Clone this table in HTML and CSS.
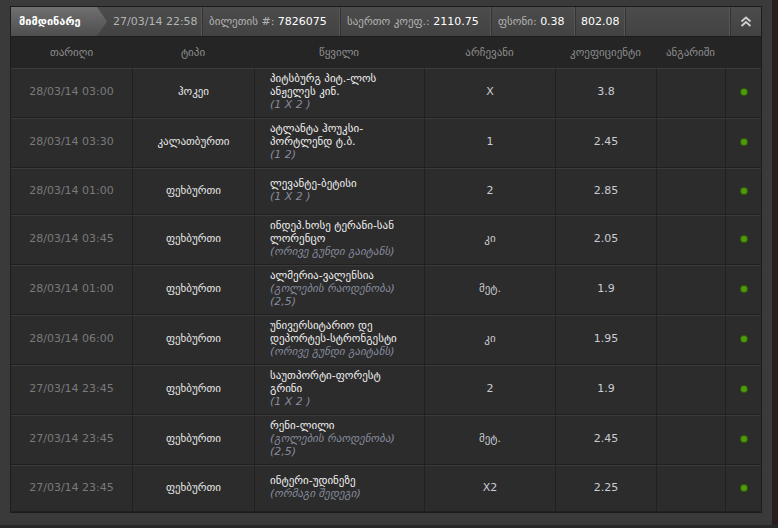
FILE: index.html
```html
<!DOCTYPE html>
<html lang="ka">
<head>
    <meta charset="UTF-8">
    <title>მიმდინარე ბილეთი</title>
    <link rel="stylesheet" href="styles.css">
</head>
<body>
    <div class="page">
        <div class="panel">
            <div class="bar">
                <div class="tab">მიმდინარე</div>
                <div class="seg seg-date">27/03/14 22:58</div>
                <div class="seg seg-ticket">ბილეთის #: <span class="val">7826075</span></div>
                <div class="seg seg-total">საერთო კოეფ.: <span class="val">2110.75</span></div>
                <div class="seg seg-stake">ფსონი: <span class="val">0.38</span></div>
                <div class="seg seg-win"><span class="val">802.08</span></div>
                <div class="seg fill"></div>
                <div class="toggle">
                    <svg width="12" height="11" viewBox="0 0 12 11">
                        <polyline points="1.5,5.5 6,1.5 10.5,5.5" fill="none" stroke="#cfcfcf" stroke-width="1.8"/>
                        <polyline points="1.5,10 6,6 10.5,10" fill="none" stroke="#cfcfcf" stroke-width="1.8"/>
                    </svg>
                </div>
            </div>

            <table class="bets">
                <colgroup>
                    <col style="width:121px">
                    <col style="width:122px">
                    <col style="width:170px">
                    <col style="width:131px">
                    <col style="width:101px">
                    <col style="width:69px">
                    <col style="width:36px">
                </colgroup>
                <thead>
                    <tr>
                        <th>თარიღი</th>
                        <th>ტიპი</th>
                        <th>წყვილი</th>
                        <th>არჩევანი</th>
                        <th>კოეფიციენტი</th>
                        <th>ანგარიში</th>
                        <th></th>
                    </tr>
                </thead>
                <tbody>
                    <tr>
                        <td class="date">28/03/14 03:00</td>
                        <td class="type">ჰოკეი</td>
                        <td class="pair">პიტსბურგ პიტ.-ლოს<br>ანჟელეს კინ.<span class="sub">(1 X 2 )</span></td>
                        <td class="num">X</td>
                        <td class="num">3.8</td>
                        <td></td>
                        <td class="state"><span class="dot"></span></td>
                    </tr>
                    <tr>
                        <td class="date">28/03/14 03:30</td>
                        <td class="type">კალათბურთი</td>
                        <td class="pair">ატლანტა ჰოუკსი-<br>პორტლენდ ტ.ბ.<span class="sub">(1 2)</span></td>
                        <td class="num">1</td>
                        <td class="num">2.45</td>
                        <td></td>
                        <td class="state"><span class="dot"></span></td>
                    </tr>
                    <tr>
                        <td class="date">28/03/14 01:00</td>
                        <td class="type">ფეხბურთი</td>
                        <td class="pair">ლევანტე-ბეტისი<span class="sub">(1 X 2 )</span></td>
                        <td class="num">2</td>
                        <td class="num">2.85</td>
                        <td></td>
                        <td class="state"><span class="dot"></span></td>
                    </tr>
                    <tr>
                        <td class="date">28/03/14 03:45</td>
                        <td class="type">ფეხბურთი</td>
                        <td class="pair">ინდეპ.ხოსე ტერანი-სან<br>ლორენცო<span class="sub">(ორივე გუნდი გაიტანს)</span></td>
                        <td class="num">კი</td>
                        <td class="num">2.05</td>
                        <td></td>
                        <td class="state"><span class="dot"></span></td>
                    </tr>
                    <tr>
                        <td class="date">28/03/14 01:00</td>
                        <td class="type">ფეხბურთი</td>
                        <td class="pair">ალმერია-ვალენსია<span class="sub">(გოლების რაოდენობა)</span><span class="sub">(2,5)</span></td>
                        <td class="num">მეტ.</td>
                        <td class="num">1.9</td>
                        <td></td>
                        <td class="state"><span class="dot"></span></td>
                    </tr>
                    <tr>
                        <td class="date">28/03/14 06:00</td>
                        <td class="type">ფეხბურთი</td>
                        <td class="pair">უნივერსიტარიო დე<br>დეპორტეს-სტრონგესტი<span class="sub">(ორივე გუნდი გაიტანს)</span></td>
                        <td class="num">კი</td>
                        <td class="num">1.95</td>
                        <td></td>
                        <td class="state"><span class="dot"></span></td>
                    </tr>
                    <tr>
                        <td class="date">27/03/14 23:45</td>
                        <td class="type">ფეხბურთი</td>
                        <td class="pair">საუთპორტი-ფორესტ<br>გრინი<span class="sub">(1 X 2 )</span></td>
                        <td class="num">2</td>
                        <td class="num">1.9</td>
                        <td></td>
                        <td class="state"><span class="dot"></span></td>
                    </tr>
                    <tr>
                        <td class="date">27/03/14 23:45</td>
                        <td class="type">ფეხბურთი</td>
                        <td class="pair">რენი-ლილი<span class="sub">(გოლების რაოდენობა)</span><span class="sub">(2,5)</span></td>
                        <td class="num">მეტ.</td>
                        <td class="num">2.45</td>
                        <td></td>
                        <td class="state"><span class="dot"></span></td>
                    </tr>
                    <tr>
                        <td class="date">27/03/14 23:45</td>
                        <td class="type">ფეხბურთი</td>
                        <td class="pair">ინტერი-უდინეზე<span class="sub">(ორმაგი შედეგი)</span></td>
                        <td class="num">X2</td>
                        <td class="num">2.25</td>
                        <td></td>
                        <td class="state"><span class="dot"></span></td>
                    </tr>
                </tbody>
            </table>
        </div>
    </div>
    <div class="rail"></div>
</body>
</html>
```

FILE: styles.css
```css
html {
    background-color: #282828;
}
body {
    margin: 0;
    display: flex;
    font-family: "DejaVu Sans", Verdana, sans-serif;
    font-size: 11px;
    line-height: 13px;
}
.page {
    width: 762px;
    height: 525px;
    box-sizing: border-box;
    padding: 6px 0 0 10px;
    background-color: #3a3a3a;
}
.rail {
    width: 10px;
    height: 525px;
    background-color: #3a3a3a;
    border-right: 6px solid #2a1f1f;
}
.panel {
    width: 752px;
    box-sizing: border-box;
    border: 1px solid #1c1c1c;
    background-color: #202020;
}

/* top bar */
.bar {
    display: flex;
    height: 29px;
    background: linear-gradient(#4c4c4c, #424242);
    border-bottom: 1px solid #1e1e1e;
    color: #b4b4b4;
}
.tab {
    width: 96px;
    box-sizing: border-box;
    padding-left: 8px;
    display: flex;
    align-items: center;
    color: #ffffff;
    font-weight: bold;
    background: linear-gradient(#707070, #4e4e4e);
    clip-path: polygon(0 0, 86px 0, 96px 50%, 86px 100%, 0 100%);
}
.seg {
    display: flex;
    align-items: center;
    box-sizing: border-box;
    padding: 0 6px;
    border-right: 1px solid #333333;
    box-shadow: inset -1px 0 0 #555555;
    white-space: pre;
}
.seg-date {
    width: 98px;
    padding-left: 8px;
    margin-left: -2px;
}
.seg-ticket {
    width: 138px;
}
.seg-total {
    width: 151px;
}
.seg-stake {
    width: 84px;
}
.seg-win {
    width: 50px;
    padding-left: 5px;
}
.val {
    color: #ffffff;
}
.fill {
    flex: 1;
}
.toggle {
    width: 30px;
    display: flex;
    align-items: center;
    justify-content: center;
}

/* bets table */
.bets {
    width: 750px;
    table-layout: fixed;
    border-collapse: separate;
    border-spacing: 0;
}
.bets th {
    height: 31px;
    padding: 0;
    background-color: #252525;
    color: #8d8d8d;
    font-weight: normal;
    text-align: center;
}
.bets tbody tr {
    height: 47px;
}
.bets td {
    padding: 3px 4px 6px;
    background-color: #2c2c2c;
    border-top: 1px solid #3b3b3b;
    border-bottom: 1px solid #202020;
    border-left: 1px solid #202020;
    text-align: center;
    vertical-align: middle;
    color: #e6e6e6;
}
.bets td:first-child {
    border-left: none;
}
.bets td.date {
    color: #7a7a7a;
}
.bets td.pair {
    text-align: left;
    padding-left: 15px;
    color: #f0f0f0;
}
.bets td.num {
    color: #c9ccd4;
}
.sub {
    display: block;
    font-style: italic;
    color: #868b9c;
}
.dot {
    display: inline-block;
    width: 6px;
    height: 6px;
    margin-top: 4px;
    border-radius: 50%;
    background-color: #4f9a0c;
    box-shadow: 0 0 0 1px #2f5a0a;
}
```
